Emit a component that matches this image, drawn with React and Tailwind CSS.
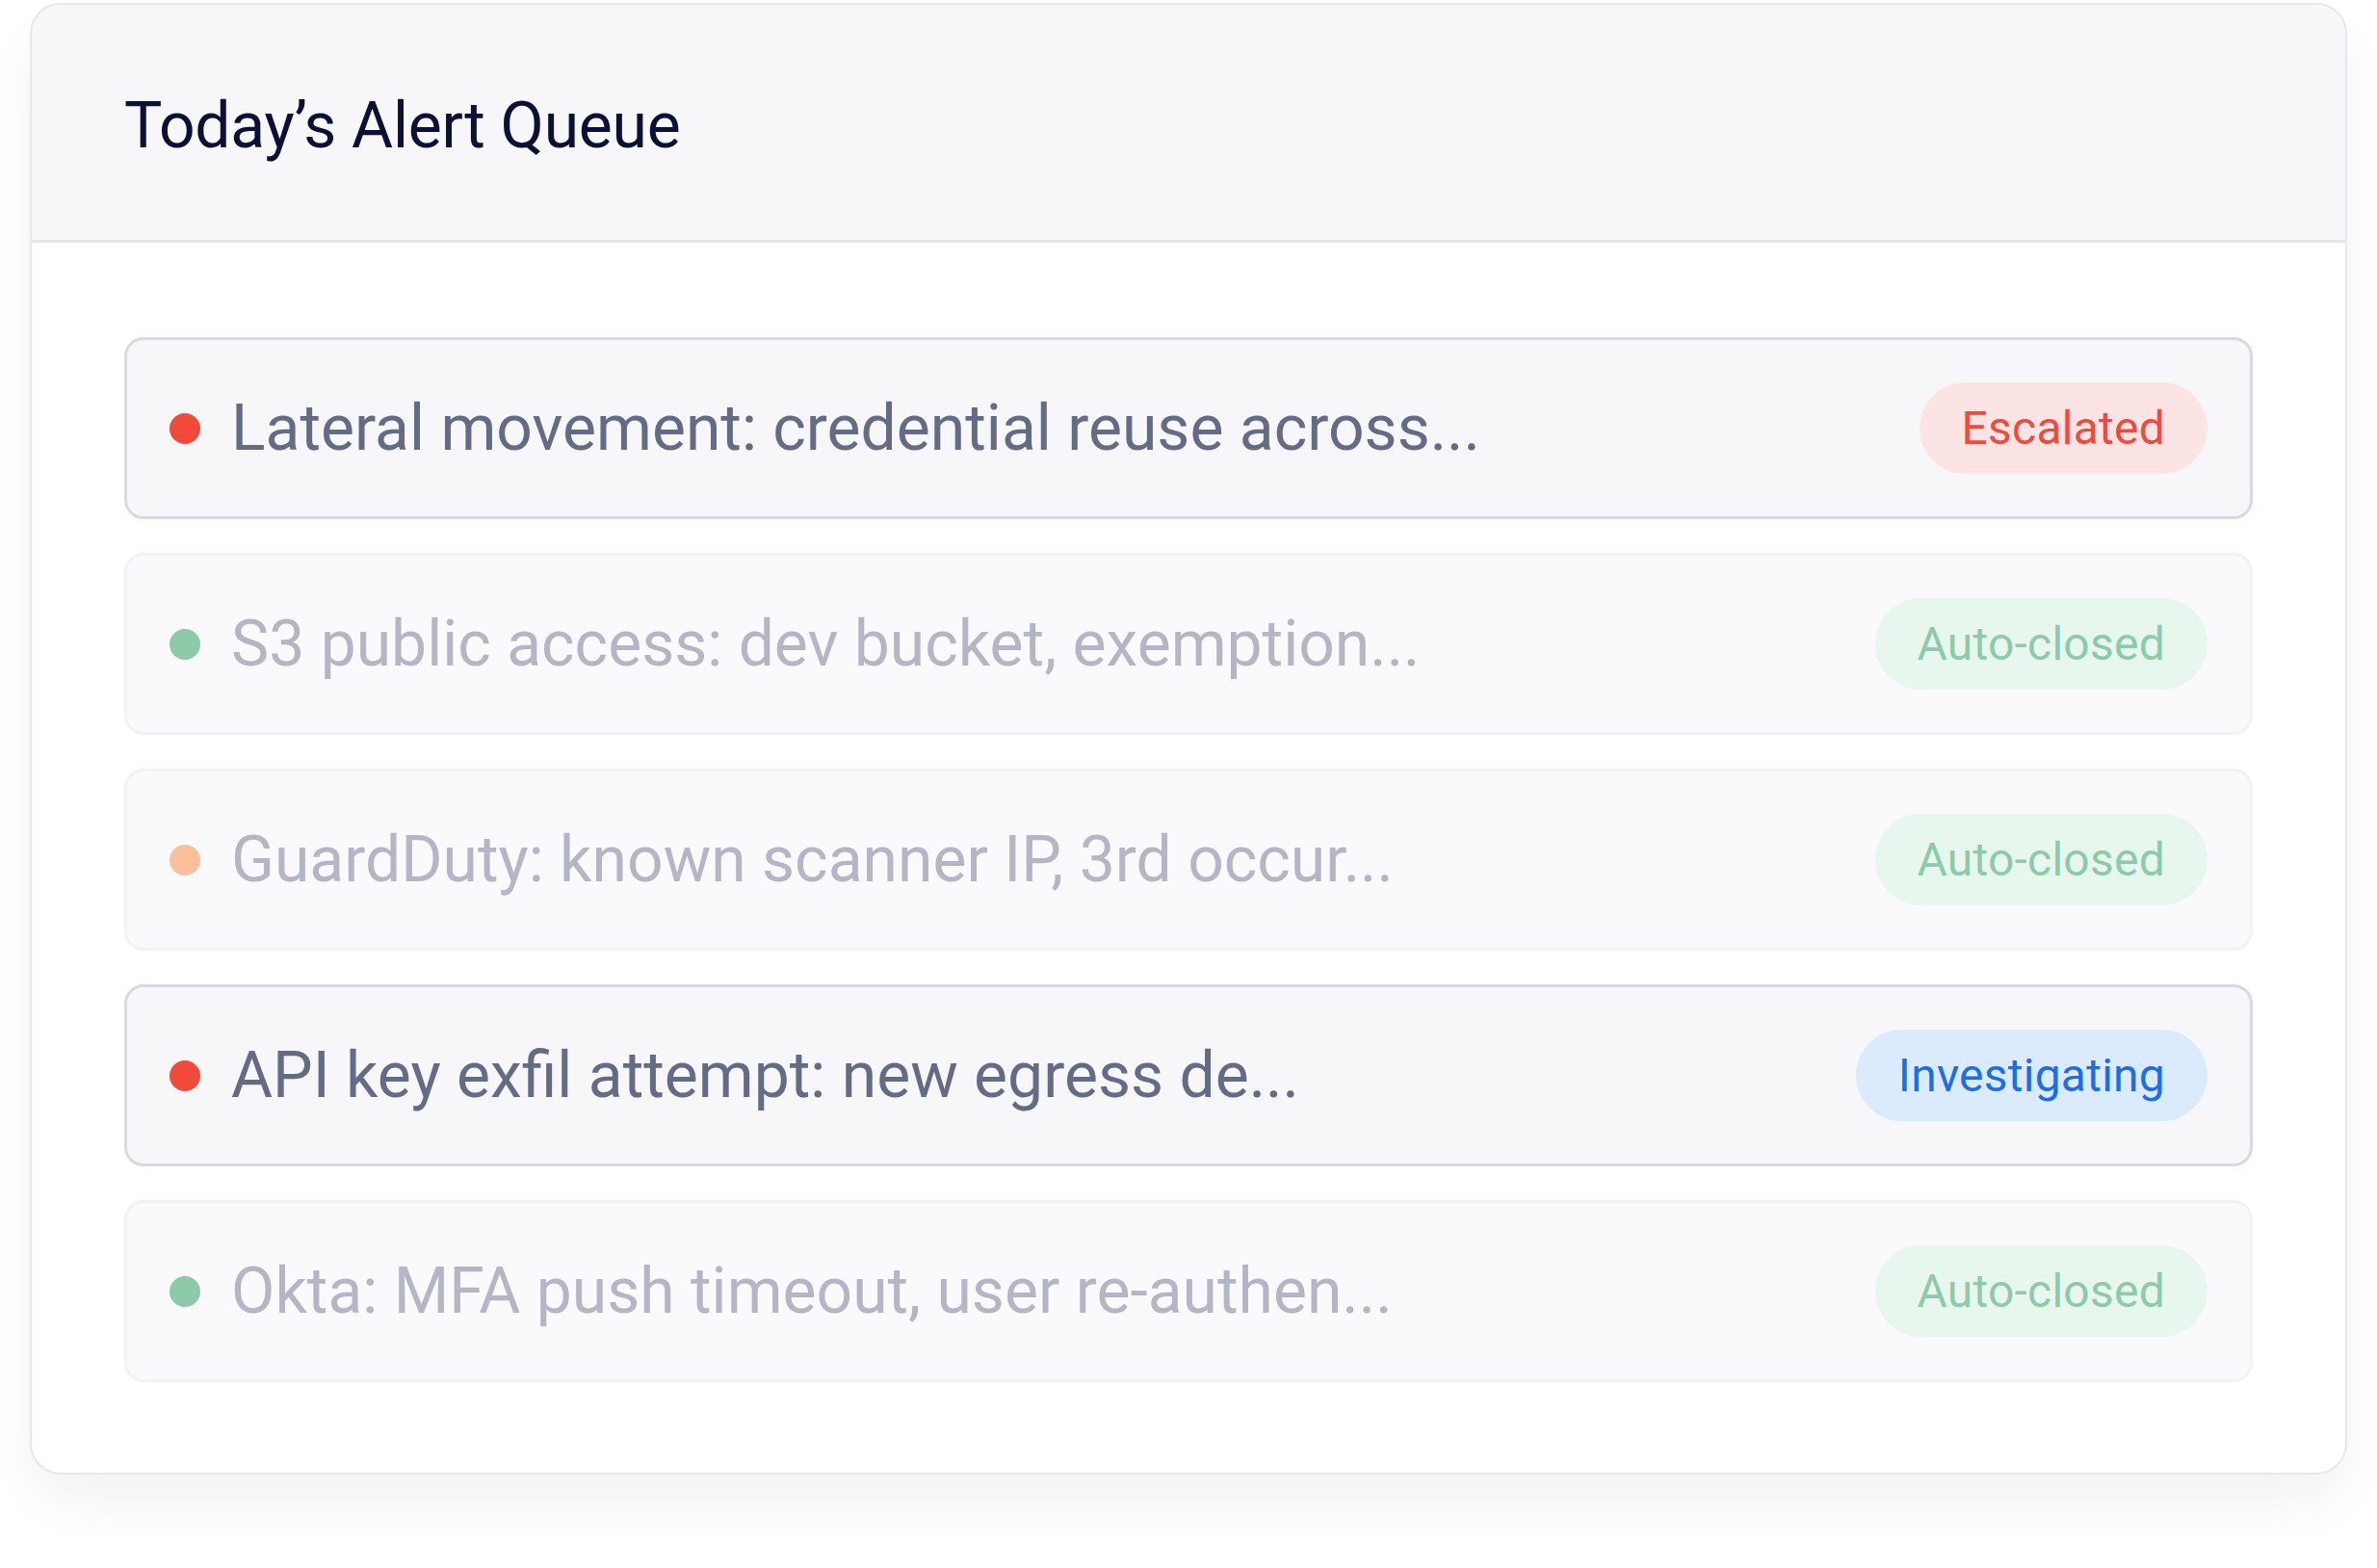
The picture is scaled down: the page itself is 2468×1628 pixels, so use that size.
const alerts = [
  { text: "Lateral movement: credential reuse across...", dot: "bg-[#f04a3a]", status: "Escalated", badge: "bg-[#fde4e4] text-[#ef4a3c]", active: true },
  { text: "S3 public access: dev bucket, exemption...", dot: "bg-[#8ccaa9]", status: "Auto-closed", badge: "bg-[#e8f7ee] text-[#8ccba8]", active: false },
  { text: "GuardDuty: known scanner IP, 3rd occur...", dot: "bg-[#fbbf9c]", status: "Auto-closed", badge: "bg-[#e8f7ee] text-[#8ccba8]", active: false },
  { text: "API key exfil attempt: new egress de...", dot: "bg-[#f04a3a]", status: "Investigating", badge: "bg-[#dceafd] text-[#1a6fe6]", active: true },
  { text: "Okta: MFA push timeout, user re-authen...", dot: "bg-[#8ccaa9]", status: "Auto-closed", badge: "bg-[#e8f7ee] text-[#8ccba8]", active: false },
];

function AlertRow({ alert }) {
  return (
    <div
      className={
        alert.active
          ? "flex h-[189px] items-center justify-between rounded-[20px] border-[3px] border-[#d9d9e3] bg-[#f7f7f9] pl-[44px] pr-[44px]"
          : "flex h-[189px] items-center justify-between rounded-[20px] border-[3px] border-[#f3f3f6] bg-[#fafafc] pl-[44px] pr-[44px]"
      }
    >
      <div className="flex items-center gap-[32px]">
        <span className={`h-[32px] w-[32px] shrink-0 rounded-full ${alert.dot}`} />
        <span
          className={
            alert.active
              ? "text-[66px] leading-none text-[#646b85]"
              : "text-[66px] leading-none text-[#b4b6c5]"
          }
        >
          {alert.text}
        </span>
      </div>
      <span className={`flex h-[95px] items-center rounded-full px-[44px] text-[48px] leading-none tracking-[0.005em] ${alert.badge}`}>
        {alert.status}
      </span>
    </div>
  );
}

export default function App() {
  return (
    <div className="min-h-screen bg-white pt-[3px] font-['Roboto',sans-serif]">
      <div className="mx-auto w-[2406px] overflow-hidden rounded-[32px] border-2 border-[#e6e6eb] bg-white shadow-[0_30px_60px_-10px_rgba(30,30,70,0.07)]">
        <div className="flex h-[247px] items-center border-b-[3px] border-[#e4e4ea] bg-[#f7f7f9] px-[96px] pt-[8px]">
          <h1 className="text-[66px] font-normal leading-none tracking-[-0.004em] text-[#0b1035]">Today’s Alert Queue</h1>
        </div>
        <div className="flex flex-col gap-[35px] px-[96px] pb-[94px] pt-[98px]">
          {alerts.map((a) => (
            <AlertRow key={a.text} alert={a} />
          ))}
        </div>
      </div>
    </div>
  );
}
